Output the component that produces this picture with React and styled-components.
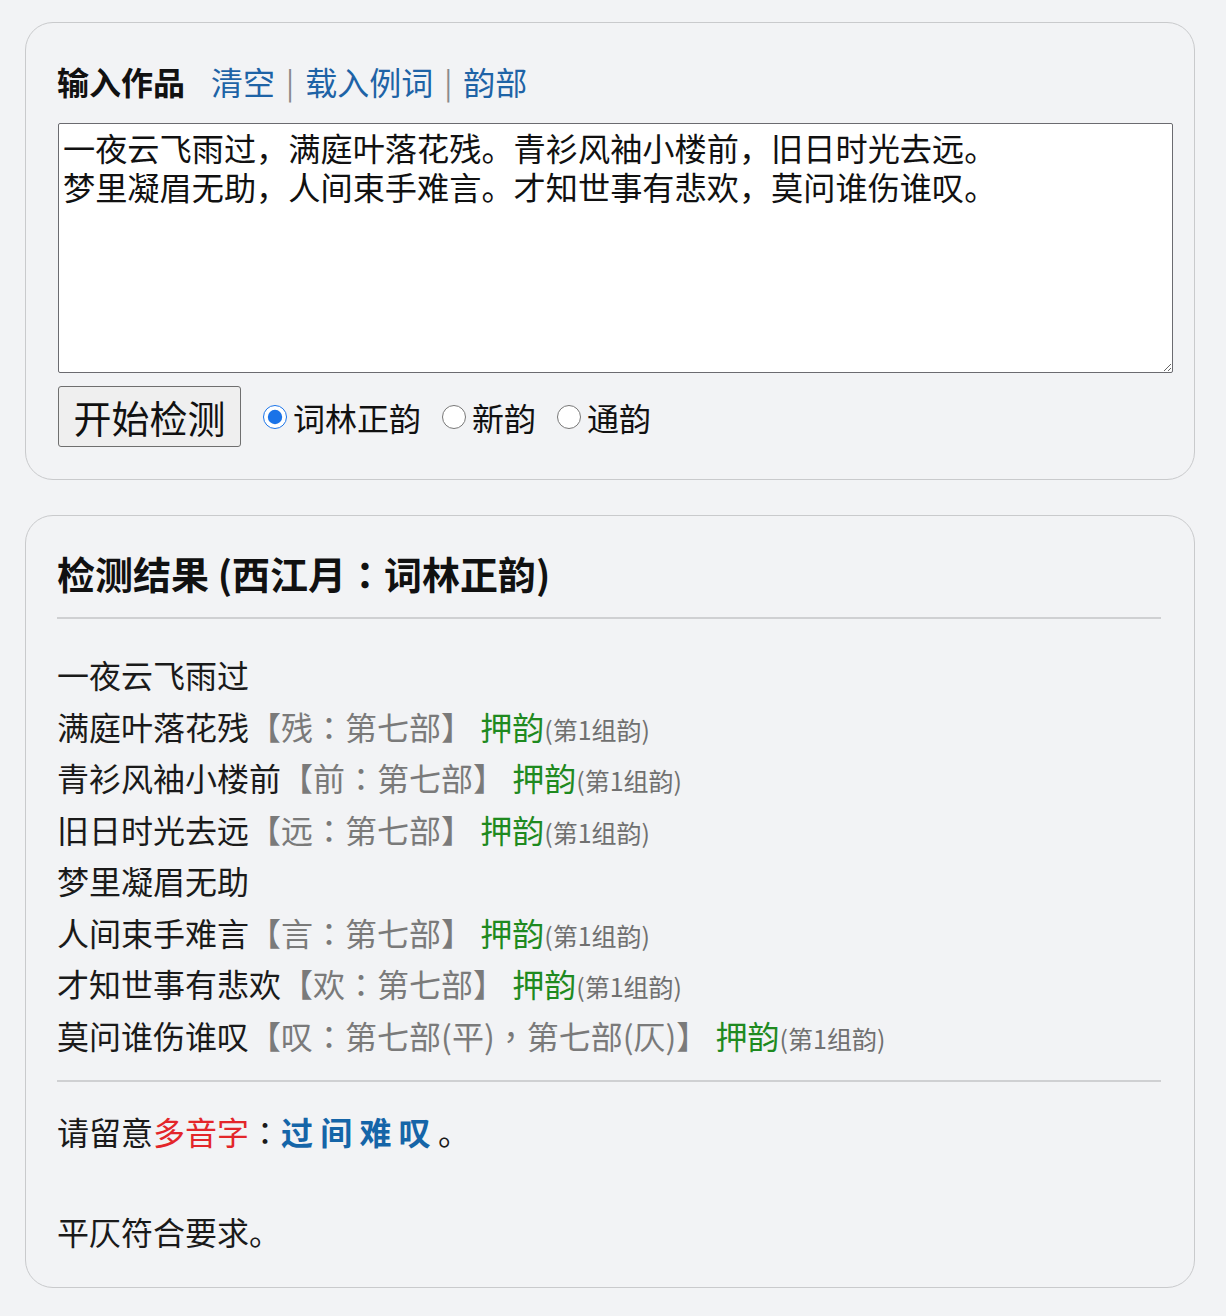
import React from "react";
import styled, { createGlobalStyle } from "styled-components";

const CJK = `"Microsoft YaHei", "Noto Sans CJK SC", "Noto Sans", sans-serif`;

const Global = createGlobalStyle`
  html, body { margin: 0; padding: 0; background: #f2f3f5; }
  body { font-family: ${CJK}; color: #1a1a1a; }
`;

const Page = styled.div`
  padding: 22px 0 28px 25px;
  display: flex;
  flex-direction: column;
  gap: 35px;
  width: 1170px;
`;

const Card = styled.section`
  box-sizing: border-box;
  border: 1.5px solid #c9cacc;
  border-radius: 28px;
  background: #f2f3f5;
  padding: ${(p) => p.$pad};
  height: ${(p) => p.$h}px;
`;

const TitleRow = styled.div`
  display: flex;
  align-items: center;
  height: 40px;
  font-size: 32px;
  line-height: 40px;
`;

const Title = styled.h2`
  margin: 0 26px 0 0;
  font-size: 32px;
  font-weight: 700;
  color: #111;
`;

const Link = styled.a`
  color: #1e63a6;
  text-decoration: none;
  cursor: pointer;
`;

const Sep = styled.span`
  color: #8a8a8a;
  margin: 0 11px;
  font-size: 30px;
`;

const Area = styled.textarea`
  display: block;
  box-sizing: border-box;
  width: calc(100% - 1px);
  margin-left: 1px;
  height: 250px;
  margin-top: 22px;
  padding: 4px 4px;
  border: 1.5px solid #6b6b70;
  border-radius: 2px;
  background: #fff;
  font-family: ${CJK};
  font-size: 32.2px;
  line-height: 39px;
  color: #111;
`;

const Controls = styled.div`
  display: flex;
  align-items: center;
  margin-top: 13px;
  padding-left: 1px;
`;

const Button = styled.button`
  box-sizing: border-box;
  width: 183px;
  height: 61px;
  border: 1.5px solid #6f6f6f;
  border-radius: 3px;
  background: #efefef;
  font-family: ${CJK};
  font-size: 38px;
  color: #111;
  padding: 0;
  margin-right: 21px;
`;

const RadioLabel = styled.label`
  display: flex;
  align-items: center;
  font-size: 32px;
  margin-right: 20px;
  color: #111;
`;

const Radio = styled.input`
  width: 24px;
  height: 24px;
  margin: 0 6px 0 1px;
  accent-color: #1a73e8;
`;

const BigTitle = styled.h2`
  margin: 0;
  font-size: 38px;
  line-height: 46px;
  font-weight: 700;
  color: #111;
`;

const Rule = styled.hr`
  border: 0;
  border-top: 2px solid #cfd0d2;
  margin: ${(p) => p.$m};
`;

const Lines = styled.div`
  font-size: 32px;
  line-height: 51.5px;
`;

const Line = styled.div`
  white-space: nowrap;
  height: 51.5px;
  overflow: visible;
`;

const Gray = styled.span`
  color: #7a7a7a;
`;

const Colon = styled.span`
  font-family: "Noto Sans CJK TC", sans-serif;
`;

const Green = styled.span`
  color: #1f8a1f;
`;

const Small = styled.span`
  font-size: 25px;
  line-height: 1;
  color: #707070;
`;

const Note = styled.div`
  font-size: 32px;
  line-height: 50px;
  margin-top: ${(p) => p.$mt || 0}px;
`;

const Red = styled.span`
  color: #e3262a;
`;

const Blue = styled.span`
  color: #1565a8;
  font-weight: 700;
`;

const Blank = styled.div`
  height: 50px;
`;

const poem =
  "一夜云飞雨过，满庭叶落花残。青衫风袖小楼前，旧日时光去远。\n梦里凝眉无助，人间束手难言。才知世事有悲欢，莫问谁伤谁叹。";

const rows = [
  { t: "一夜云飞雨过" },
  { t: "满庭叶落花残", c: "残", b: "第七部" },
  { t: "青衫风袖小楼前", c: "前", b: "第七部" },
  { t: "旧日时光去远", c: "远", b: "第七部" },
  { t: "梦里凝眉无助" },
  { t: "人间束手难言", c: "言", b: "第七部" },
  { t: "才知世事有悲欢", c: "欢", b: "第七部" },
  { t: "莫问谁伤谁叹", c: "叹", two: true },
];

export default function App() {
  return (
    <>
      <Global />
      <Page>
        <Card $pad="38px 21px 0 31px" $h={458}>
          <TitleRow>
            <Title>输入作品</Title>
            <Link>清空</Link>
            <Sep>|</Sep>
            <Link>载入例词</Link>
            <Sep>|</Sep>
            <Link>韵部</Link>
          </TitleRow>
          <Area defaultValue={poem} spellCheck={false} />
          <Controls>
            <Button>开始检测</Button>
            <RadioLabel>
              <Radio type="radio" name="yun" defaultChecked />
              词林正韵
            </RadioLabel>
            <RadioLabel>
              <Radio type="radio" name="yun" />
              新韵
            </RadioLabel>
            <RadioLabel>
              <Radio type="radio" name="yun" />
              通韵
            </RadioLabel>
          </Controls>
        </Card>
        <Card $pad="34px 33px 0 31px" $h={773}>
          <BigTitle>
            检测结果 (西江月<Colon>：</Colon>词林正韵)
          </BigTitle>
          <Rule $m="21px 0 30px 0" />
          <Lines>
            {rows.map((r, i) => (
              <Line key={i}>
                {r.t}
                {r.c && (
                  <>
                    <Gray>
                      【{r.c}
                      <Colon>：</Colon>
                      {r.two ? (
                        <>
                          第七部(平)<Colon>，</Colon>第七部(仄)
                        </>
                      ) : (
                        r.b
                      )}
                      】
                    </Gray>{" "}
                    <Green>押韵</Green>
                    <Small>(第1组韵)</Small>
                  </>
                )}
              </Line>
            ))}
          </Lines>
          <Rule $m="19px 0 0 0" />
          <Note $mt={24}>
            请留意<Red>多音字</Red>
            <Colon>：</Colon>
            <Blue>过 间 难 叹</Blue> 。
          </Note>
          <Blank />
          <Note>平仄符合要求。</Note>
        </Card>
      </Page>
    </>
  );
}
